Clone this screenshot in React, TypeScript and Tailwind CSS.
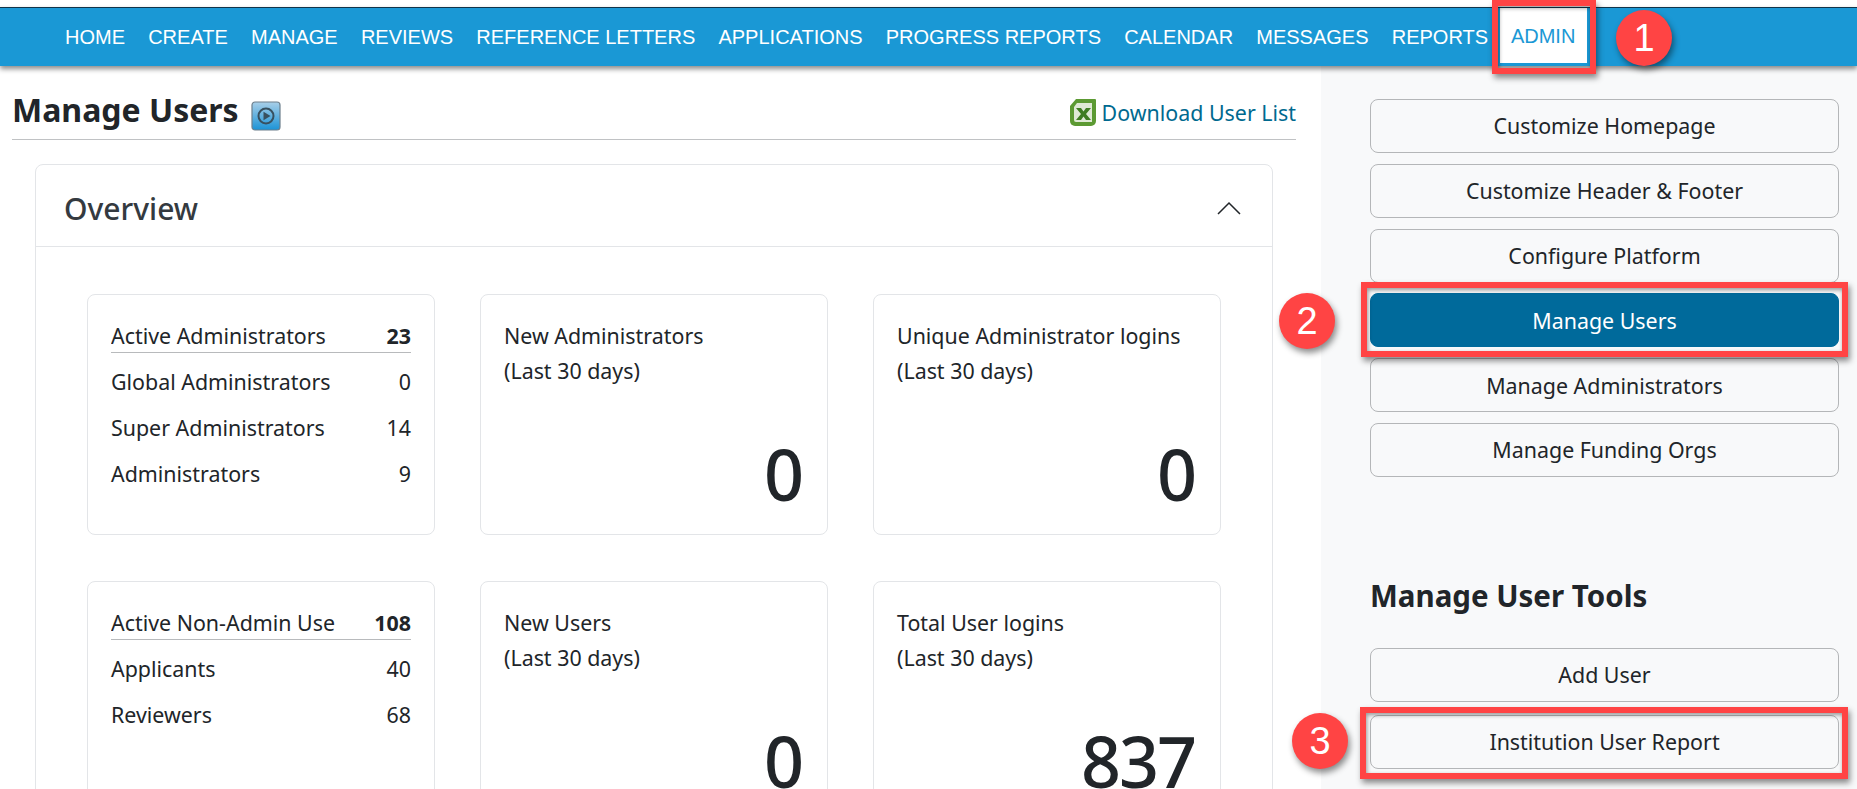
const navItems = ['HOME', 'CREATE', 'MANAGE', 'REVIEWS', 'REFERENCE LETTERS', 'APPLICATIONS', 'PROGRESS REPORTS', 'CALENDAR', 'MESSAGES', 'REPORTS'];

const adminButtons = ['Customize Homepage', 'Customize Header & Footer', 'Configure Platform', 'Manage Users', 'Manage Administrators', 'Manage Funding Orgs'];

const toolButtons = ['Add User', 'Institution User Report'];

const PlayIcon = () => (
  <svg width="30" height="30" viewBox="0 0 30 30" className="ml-[12px] mt-[12px] shrink-0">
    <defs>
      <linearGradient id="playBg" x1="0" y1="0" x2="0" y2="1">
        <stop offset="0" stopColor="#a9cfe8" />
        <stop offset="1" stopColor="#1b93d6" />
      </linearGradient>
    </defs>
    <rect x="1" y="1" width="28" height="28" rx="3" fill="url(#playBg)" stroke="#6d7f8c" strokeWidth="1.2" />
    <circle cx="15" cy="15" r="7.5" fill="none" stroke="#38505f" strokeWidth="2" />
    <path d="M12.5 10.8 19.5 15l-7 4.2z" fill="#38505f" />
  </svg>
);

const ExcelIcon = () => (
  <svg width="30" height="30" viewBox="0 0 30 30" className="shrink-0">
    <path d="M8 1h19a1 1 0 0 1 1 1v21a5 5 0 0 1-5 5H7a5 5 0 0 1-5-5V8z" fill="#5c9a33" />
    <path d="M9 5h15v19H8a2 2 0 0 1-2-2V9z" fill="#dfe9d5" />
    <path d="M8 10h5l2.500 3.500L18 10h5l-5 6 5 6h-5l-2.500-3.500L13 22H8l5-6z" fill="#3f7d22" />
  </svg>
);

const ChevronUp = () => (
  <svg width="26" height="14" viewBox="0 0 26 14" fill="none" stroke="#212529" strokeWidth="1.5" className="mt-[4px]">
    <path d="M2 13 13 2l11 11" />
  </svg>
);

const ListTile = ({ title, total, rows }: { title: string; total: number; rows: [string, number][] }) => (
  <div className="h-[241px] border border-[#e3e5e8] rounded-[8px] bg-white px-[23px] pt-[23px]">
    <div className="flex items-center h-[35px] pt-[3px] border-b border-[#b8babc]">
      <span className="w-[224px] whitespace-nowrap overflow-hidden">{title}</span>
      <span className="flex-1 text-right font-bold">{total}</span>
    </div>
    <div className="pt-[6px]">
      {rows.map(([name, count]) => (
        <div key={name} className="flex items-center h-[46px]">
          <span className="flex-1">{name}</span>
          <span>{count}</span>
        </div>
      ))}
    </div>
  </div>
);

const StatTile = ({ title, value }: { title: string; value: number }) => (
  <div className="h-[241px] border border-[#e3e5e8] rounded-[8px] bg-white pl-[23px] pr-[25px] pt-[23px] flex flex-col">
    <div className="leading-[35px] whitespace-nowrap">{title}</div>
    <div className="leading-[35px]">(Last 30 days)</div>
    <div className="text-right text-[70px] font-medium tracking-[-2px] leading-[80px] mt-[46px]">{value}</div>
  </div>
);

const SideButton = ({ label, active }: { label: string; active?: boolean }) => (
  <div
    className={
      active
        ? 'h-[54px] pt-[1px] rounded-[8px] bg-[#006a9b] text-white flex items-center justify-center border border-[#006a9b]'
        : 'h-[54px] pt-[1px] rounded-[8px] bg-[#f8f9fa] text-[#212529] flex items-center justify-center border border-[#b4b6b8]'
    }
  >
    {label}
  </div>
);

const Badge = ({ n, className }: { n: number; className: string }) => (
  <div
    className={`absolute w-[56px] h-[56px] rounded-full bg-[#ff4444] text-white flex items-center justify-center text-[38px] shadow-[2px_4px_6px_rgba(0,0,0,0.45)] ${className}`}
    style={{ fontFamily: '"Liberation Sans", Arial, sans-serif' }}
  >
    {n}
  </div>
);

const RedBox = ({ className }: { className: string }) => (
  <div className={`absolute border-[6px] border-[#ff4444] shadow-[2px_4px_6px_rgba(0,0,0,0.45),inset_1px_2px_4px_rgba(0,0,0,0.4)] ${className}`} />
);

const App = () => {
  return (
    <div
      className="relative w-[1857px] h-[789px] overflow-hidden bg-white text-[#212529] text-[21.4px]"
      style={{ fontFamily: '"Noto Sans", "Open Sans", sans-serif' }}
    >
      <div className="pt-[7px]">
        <nav
          className="relative z-10 h-[59px] bg-[#1a98d5] border-t border-[#10344a] flex items-center pl-[53.4px] shadow-[0_3px_5px_rgba(0,0,0,0.45)] text-[20px] text-white"
          style={{ fontFamily: '"Liberation Sans", Arial, sans-serif' }}
        >
          {navItems.map((item) => (
            <a key={item} className="px-[11.6px] whitespace-nowrap">
              {item}
            </a>
          ))}
          <a className="w-[87px] h-[58px] bg-white text-[#1a98d5] border-b-[3px] border-[#1a98d5] flex items-center justify-center">
            ADMIN
          </a>
        </nav>
      </div>

      <div className="flex h-[723px]">
        <main className="w-[1321px] pl-[12px] pr-[25px] shrink-0">
          <div className="flex items-center h-[74px] pt-[14px] border-b border-[#c0c2c4]">
            <h1 className="text-[32px] font-bold">Manage Users</h1>
            <PlayIcon />
            <a className="ml-auto mt-[7px] flex items-center gap-[4px] text-[#00698f]">
              <ExcelIcon />
              Download User List
            </a>
          </div>

          <section className="mt-[24px] mx-[23px] border border-[#e3e5e8] rounded-[8px] bg-white">
            <div className="h-[82px] flex items-center justify-between pl-[28px] pr-[30px] border-b border-[#e3e5e8]">
              <h2 className="text-[30px] font-medium text-[#343a40] mt-[6px]">Overview</h2>
              <ChevronUp />
            </div>
            <div className="grid grid-cols-3 gap-x-[45px] gap-y-[46px] pl-[51px] pr-[51px] pt-[47px]">
              <ListTile
                title="Active Administrators"
                total={23}
                rows={[
                  ['Global Administrators', 0],
                  ['Super Administrators', 14],
                  ['Administrators', 9],
                ]}
              />
              <StatTile title="New Administrators" value={0} />
              <StatTile title="Unique Administrator logins" value={0} />
              <ListTile
                title="Active Non-Admin Users"
                total={108}
                rows={[
                  ['Applicants', 40],
                  ['Reviewers', 68],
                ]}
              />
              <StatTile title="New Users" value={0} />
              <StatTile title="Total User logins" value={837} />
            </div>
          </section>
        </main>

        <aside className="flex-1 bg-[#f8f9fa] pl-[49px] pr-[18px] pt-[33px]">
          <div className="flex flex-col gap-[10.8px]">
            {adminButtons.map((label) => (
              <SideButton key={label} label={label} active={label === 'Manage Users'} />
            ))}
          </div>
          <h3 className="mt-[97px] h-[44px] flex items-center text-[29.5px] font-bold">Manage User Tools</h3>
          <div className="mt-[30px] flex flex-col gap-[13px]">
            {toolButtons.map((label) => (
              <SideButton key={label} label={label} />
            ))}
          </div>
        </aside>
      </div>

      <RedBox className="z-20 left-[1492px] top-0 w-[104px] h-[74px]" />
      <RedBox className="z-20 left-[1361px] top-[282px] w-[487px] h-[75px]" />
      <RedBox className="z-20 left-[1360px] top-[707px] w-[488px] h-[72px]" />
      <Badge n={1} className="z-20 left-[1616px] top-[10px]" />
      <Badge n={2} className="z-20 left-[1279px] top-[293px]" />
      <Badge n={3} className="z-20 left-[1292px] top-[713px]" />
    </div>
  );
};

export default App;
